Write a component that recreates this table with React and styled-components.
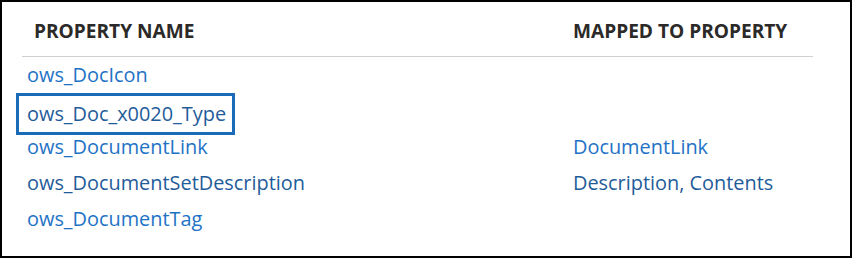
import styled, { createGlobalStyle } from "styled-components"

const GlobalStyle = createGlobalStyle`
    html, body {
        margin: 0;
        padding: 0;
        background: #ffffff;
    }
    body {
        font-family: "Open Sans", "Noto Sans", Arial, sans-serif;
    }
`;

// each row of the mapping table; "visited" rows are shown in the darker link colour
const rows = [
    { name: "ows_DocIcon", mapped: "" },
    { name: "ows_Doc_x0020_Type", mapped: "", visited: true, highlight: true },
    { name: "ows_DocumentLink", mapped: "DocumentLink" },
    { name: "ows_DocumentSetDescription", mapped: "Description, Contents", visited: true, mappedVisited: true },
    { name: "ows_DocumentTag", mapped: "" },
];

function App() {
    return (
        <>
            <GlobalStyle />
            <Frame>
                <Table>
                    <HeaderRow>
                        <HeaderCell>PROPERTY NAME</HeaderCell>
                        <HeaderCell>MAPPED TO PROPERTY</HeaderCell>
                    </HeaderRow>
                    {rows.map((row) => (
                        <Row key={row.name}>
                            <NameCell>
                                {row.highlight ? (
                                    <Highlight>
                                        <Link $visited={row.visited}>{row.name}</Link>
                                    </Highlight>
                                ) : (
                                    <Link $visited={row.visited}>{row.name}</Link>
                                )}
                            </NameCell>
                            <MappedCell>
                                <Link $visited={row.mappedVisited}>{row.mapped}</Link>
                            </MappedCell>
                        </Row>
                    ))}
                </Table>
            </Frame>
        </>
    )
}

const Frame = styled.div`
    box-sizing: border-box;
    width: 852px;
    height: 258px;
    border: 2px solid #000000;
    padding: 0 37px 0 20px;
`;

const Table = styled.div`
    display: flex;
    flex-direction: column;
`;

const HeaderRow = styled.div`
    display: grid;
    grid-template-columns: 551px 1fr;
    border-bottom: 1px solid #d2d0ce;
`;

const HeaderCell = styled.div`
    padding: 18px 0 14px 12px;
    line-height: 22px;
    font-size: 19.1px;
    font-weight: 700;
    color: #2b2a29;
    white-space: nowrap;
    &:last-child {
        padding-left: 0;
    }
`;

const Row = styled.div`
    display: grid;
    grid-template-columns: 551px 1fr;
    height: 36px;
`;

const NameCell = styled.div`
    display: flex;
    align-items: center;
    padding-left: 5px;
`;

const MappedCell = styled.div`
    display: flex;
    align-items: center;
`;

const Highlight = styled.div`
    display: flex;
    align-items: center;
    box-sizing: border-box;
    height: 42px;
    margin: 0 0 0 -11px;
    padding: 0 6px 0 8px;
    border: 3px solid #1a6bb8;
`;

const Link = styled.span`
    font-size: 19.9px;
    line-height: 24px;
    color: ${(props) => (props.$visited ? "#1f5c9a" : "#1e72c6")};
    white-space: nowrap;
`;

export default App
